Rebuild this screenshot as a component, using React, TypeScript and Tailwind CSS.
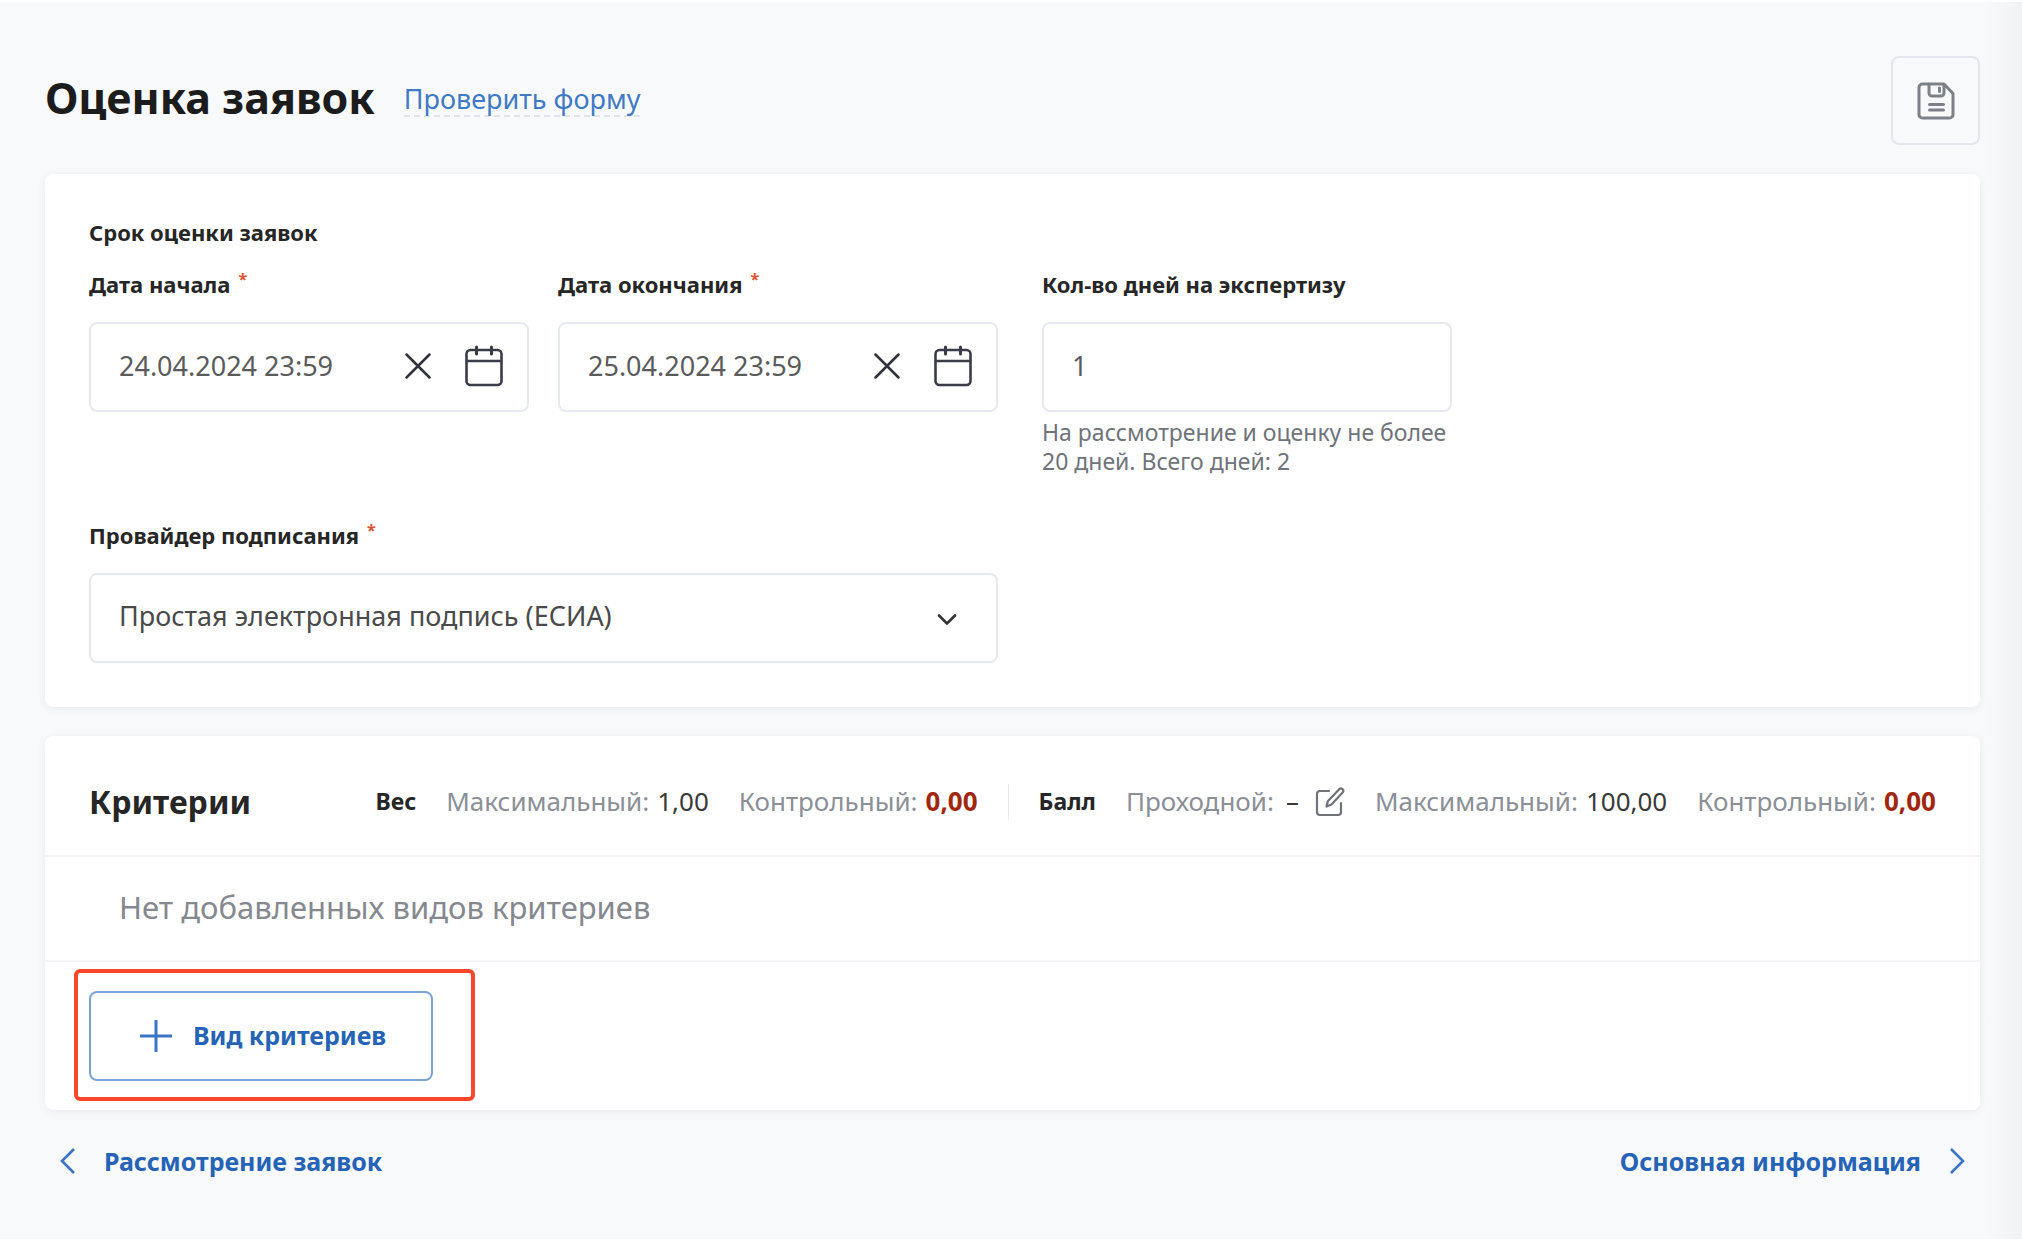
import React, { useState } from "react";

function SaveIcon() {
  return (
    <svg width="38" height="38" viewBox="0 0 38 38" fill="none" stroke="#7c8088" strokeWidth="3" strokeLinejoin="round" strokeLinecap="round" aria-hidden="true">
      <path d="M5.5 2H27l9 9.500V32.500a3.500 3.500 0 0 1-3.500 3.500h-27A3.500 3.500 0 0 1 2 32.500v-27A3.500 3.500 0 0 1 5.500 2Z" />
      <path d="M12 2v9a3 3 0 0 0 3 3h9a3 3 0 0 0 3-3V3" />
      <path d="M22.500 6v3.500M12.500 22.500h14M12.500 28h14" />
    </svg>
  );
}

function CloseIcon() {
  return (
    <svg width="26" height="26" viewBox="0 0 26 26" fill="none" stroke="#2f323b" strokeWidth="2.5" strokeLinecap="round" aria-hidden="true">
      <path d="M1.500 1.500l23 23M24.500 1.500l-23 23" />
    </svg>
  );
}

function CalendarIcon() {
  return (
    <svg width="38" height="42" viewBox="0 0 38 42" fill="none" stroke="#3a3d47" strokeWidth="2.600" strokeLinecap="round" aria-hidden="true">
      <rect x="1.500" y="5" width="35" height="35" rx="4" />
      <path d="M2 16h34" />
      <path d="M11.500 2v7M26.500 2v7" strokeWidth="3" />
    </svg>
  );
}

function EditIcon() {
  return (
    <svg width="30" height="30" viewBox="0 0 30 30" fill="none" stroke="#6f737a" strokeWidth="2.200" strokeLinejoin="round" strokeLinecap="round" aria-hidden="true">
      <path d="M14 4H5a3 3 0 0 0-3 3v18a3 3 0 0 0 3 3h18a3 3 0 0 0 3-3v-9" />
      <path d="M24.200 2.200a2.300 2.300 0 0 1 3.400 3.200L16.500 17.500l-5 2 1.300-5.200Z" />
    </svg>
  );
}

function Required() {
  return <span className="ml-2 align-text-top text-[16px] leading-5 font-bold text-[#d9542f]">*</span>;
}

function DateField({ id, label, initial }: { id: string; label: string; initial: string }) {
  const [value, setValue] = useState(initial);
  return (
    <div className="flex w-[440px] flex-col">
      <label htmlFor={id} className="text-[22px] leading-8 font-bold text-[#262626]">
        {label}
        <Required />
      </label>
      <div className="mt-[22px] flex h-[90px] items-center rounded-lg border-2 border-[#e6e9f0] bg-white pr-6 pb-[2px] pl-7">
        <input
          id={id}
          type="text"
          value={value}
          onChange={(e) => setValue(e.target.value)}
          className="min-w-0 flex-1 bg-transparent text-[27px] text-[#5b5b5b] outline-none"
        />
        <button type="button" aria-label="Очистить" onClick={() => setValue("")} className="mr-[34px]">
          <CloseIcon />
        </button>
        <button type="button" aria-label="Открыть календарь">
          <CalendarIcon />
        </button>
      </div>
    </div>
  );
}

function Metric({ label, value, alert, edit }: { label: string; value: string; alert?: boolean; edit?: boolean }) {
  return (
    <span className="flex items-center gap-2 text-[26px] text-[#8b8f97]">
      {label}
      <span className={alert ? "font-bold text-[#a1260d]" : edit ? "px-1 text-[#3a3a3a]" : "text-[#3a3a3a]"}>{value}</span>
      {edit && (
        <button type="button" aria-label="Изменить проходной балл" className="ml-1">
          <EditIcon />
        </button>
      )}
    </span>
  );
}

export default function App() {
  const [days, setDays] = useState("1");
  return (
    <div className="min-h-screen border-t-2 border-b-3 border-white bg-[#f8f9fb] bg-[linear-gradient(to_left,#f1f2f4,#f8f9fb_36px)] pt-[54px] pr-[42px] pl-[45px] font-['Noto_Sans',sans-serif]">
      <header className="flex items-start">
        <h1 className="mt-[18px] text-[43px] leading-[48px] font-bold text-[#1c1c1c]">Оценка заявок</h1>
        <a href="#check" className="mt-[27px] ml-[29px] border-b-2 border-dashed border-[#dfe3ea] text-[27px] leading-8 text-[#3f7ac6]">
          Проверить форму
        </a>
        <button type="button" aria-label="Сохранить" className="ml-auto flex h-[89px] w-[89px] items-center justify-center rounded-lg border-2 border-[#e4e6ed]">
          <SaveIcon />
        </button>
      </header>

      <main>
        <section className="mt-[29px] rounded-lg bg-white px-11 pt-[42px] pb-11 shadow-[0_2px_8px_rgba(30,40,60,0.07)]">
          <h2 className="text-[22px] leading-8 font-bold text-[#262626]">Срок оценки заявок</h2>
          <div className="mt-5 flex items-start">
            <DateField id="start" label="Дата начала" initial="24.04.2024 23:59" />
            <div className="ml-[29px]">
              <DateField id="end" label="Дата окончания" initial="25.04.2024 23:59" />
            </div>
            <div className="ml-11 flex w-[410px] flex-col">
              <label htmlFor="days" className="text-[22px] leading-8 font-bold text-[#262626]">
                Кол-во дней на экспертизу
              </label>
              <input
                id="days"
                type="text"
                value={days}
                onChange={(e) => setDays(e.target.value)}
                aria-describedby="days-hint"
                className="mt-[22px] h-[90px] rounded-lg border-2 border-[#e6e9f0] bg-white px-7 pb-1 text-[27px] text-[#5b5b5b] outline-none"
              />
              <p id="days-hint" className="mt-[6px] text-[23px] leading-[29px] text-[#6f737a]">
                На рассмотрение и оценку не более 20 дней. Всего дней: 2
              </p>
            </div>
          </div>

          <div className="mt-[43px] flex w-[909px] flex-col">
            <label htmlFor="provider" className="text-[22px] leading-8 font-bold text-[#262626]">
              Провайдер подписания
              <Required />
            </label>
            <div className="relative mt-[22px]">
              <select id="provider" className="h-[90px] w-full appearance-none rounded-lg border-2 border-[#e6e9f0] bg-white px-7 pb-1 text-[27px] text-[#4a4a4a] outline-none">
                <option>Простая электронная подпись (ЕСИА)</option>
              </select>
              <svg className="pointer-events-none absolute top-10 right-10" width="22" height="14" viewBox="0 0 22 14" fill="none" stroke="#333" strokeWidth="2.600" strokeLinecap="round" strokeLinejoin="round" aria-hidden="true">
                <path d="M3 2.500l8 8 8-8" />
              </svg>
            </div>
          </div>
        </section>

        <section className="mt-[29px] rounded-lg bg-white shadow-[0_2px_8px_rgba(30,40,60,0.07)]">
          <div className="flex h-[121px] items-center justify-between border-b-2 border-[#f2f4f7] px-11 pt-3">
            <h2 className="text-[32px] font-bold text-[#262626]">Критерии</h2>
            <div className="flex items-center gap-[30px] whitespace-nowrap">
              <b className="text-[23px] text-[#262626]">Вес</b>
              <Metric label="Максимальный:" value="1,00" />
              <Metric label="Контрольный:" value="0,00" alert />
              <span className="h-9 w-px bg-[#e6e9f0]" />
              <b className="text-[23px] text-[#262626]">Балл</b>
              <Metric label="Проходной:" value="–" edit />
              <Metric label="Максимальный:" value="100,00" />
              <Metric label="Контрольный:" value="0,00" alert />
            </div>
          </div>
          <p className="flex h-[105px] items-center border-b-2 border-[#f2f4f7] px-[74px] pb-[2px] text-[31px] text-[#85888f]">
            Нет добавленных видов критериев
          </p>
          <div className="flex px-[29px] pt-[7px] pb-[9px]">
            <div className="w-[401px] rounded-md border-4 border-[#f9472b] pt-[18px] pb-4 pl-[11px]">
              <button type="button" className="flex h-[90px] w-[344px] items-center gap-[21px] rounded-lg border-2 border-[#7ba3d8] pl-[49px] text-[25px] font-bold whitespace-nowrap text-[#2463b6]">
                <svg width="32" height="32" viewBox="0 0 32 32" fill="none" stroke="#3a74c4" strokeWidth="3" aria-hidden="true">
                  <path d="M16 0v32M0 16h32" />
                </svg>
                Вид критериев
              </button>
            </div>
          </div>
        </section>
      </main>

      <nav className="mt-[31px] flex items-center justify-between px-[15px] text-[25px] leading-10 font-bold text-[#2463b6]">
        <a href="#review" className="flex items-center gap-[29px]">
          <svg width="15" height="26" viewBox="0 0 15 26" fill="none" stroke="#3a74c4" strokeWidth="2.600" aria-hidden="true">
            <path d="M14 1L2 13l12 12" />
          </svg>
          Рассмотрение заявок
        </a>
        <a href="#info" className="flex items-center gap-[29px]">
          Основная информация
          <svg width="15" height="26" viewBox="0 0 15 26" fill="none" stroke="#3a74c4" strokeWidth="2.600" aria-hidden="true">
            <path d="M1 1l12 12L1 25" />
          </svg>
        </a>
      </nav>
    </div>
  );
}
